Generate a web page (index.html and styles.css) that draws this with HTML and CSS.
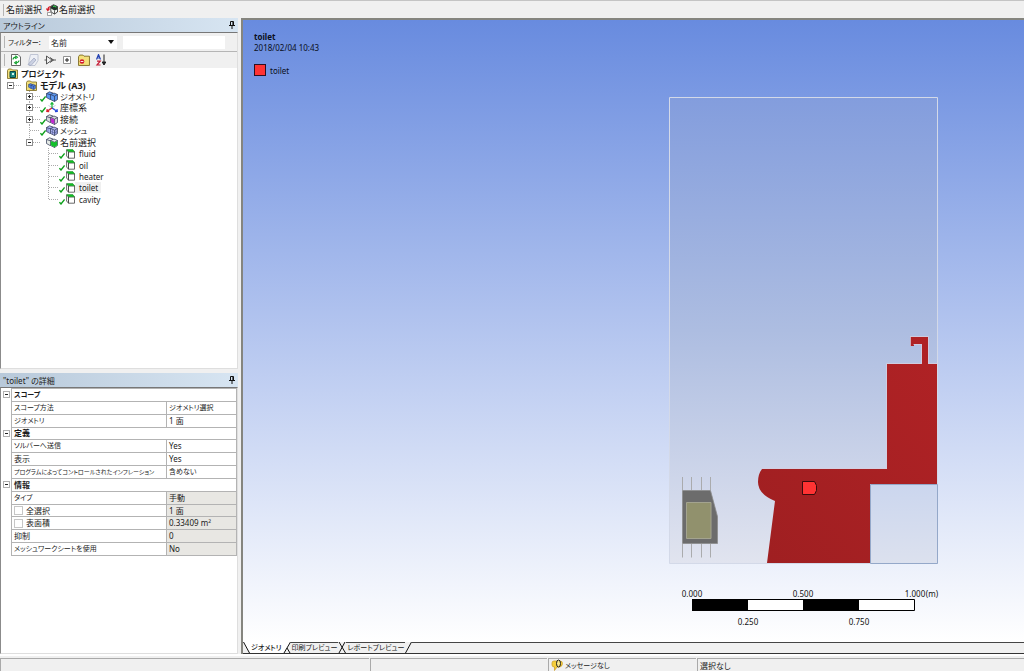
FILE: index.html
```html
<!DOCTYPE html>
<html lang="ja">
<head>
<meta charset="utf-8">
<title>toilet</title>
<link rel="stylesheet" href="styles.css">
</head>
<body>
<svg class="defs" aria-hidden="true">
  <symbol id="pin" viewBox="0 0 6 8"><path d="M1.5 .5h3v4h-3zM0 4.5h6M3 5v3" fill="none" stroke="#111"/><path d="M3.4 1h1.4v3.5H3.4z" fill="#111"/></symbol>
  <symbol id="check" viewBox="0 0 6 8"><path d="M.4 5.200 2 7 5.600 2.400" fill="none" stroke="#0ea01c" stroke-width="1.400"/></symbol>
  <symbol id="cubes" viewBox="0 0 12 11"><g stroke="#2b3450" stroke-width=".7" stroke-linejoin="round"><path d="M.5 2.500 3.500 .8 7 2v5L4 8.500.5 6.500z"/><path d="M4.500 3.500 8 2 11.500 3.500v5L8.500 10.500 4.500 8.500z"/><path d="M4.500 3.500 8.500 5.200 11.500 3.500M8.500 5.200v5.300M.5 2.500l3.800 1.300" fill="none"/></g></symbol>
  <symbol id="sel" viewBox="0 0 9 10"><path d="M2.500 2.900h6v6.300h-6zM.6 1v6l1.900 2.200V2.900z" fill="#fff" stroke="#444" stroke-width=".8"/><path d="M.6.6h6.200l1.900 2.200H2.500z" fill="#0cc822" stroke="#17751f" stroke-width=".5"/></symbol>
  <symbol id="folder" viewBox="0 0 11 11"><path d="M.5 2.500 1.500 1h3l1 1H10.500v8.500H.5z" fill="#f3e07a" stroke="#77651c" stroke-width=".8"/></symbol>
</svg>

<header class="topbar">
  <span class="grip"></span>
  <span>名前選択</span>
  <button class="topbtn"><svg width="12" height="12" viewBox="0 0 12 12"><path d="M4.500 2.500 7.500.7l4 1.800v5.500L8.500 10 5 8z" fill="#f4f6f4" stroke="#222" stroke-width=".8"/><path d="M5 2.500 7.500 1l3.800 1.500v3L8.500 6.500 5 4.500z" fill="#23332a"/><path d="M7 2.500 9 2l1 1.500" stroke="#35dc50" fill="none"/><path d="M8.500 6.500V10" stroke="#222" stroke-width=".7"/><path d="M4.500 2.500Q1.800 3 1.800 6M.3 4.500l1.500 2 1.700-2" fill="none" stroke="#d51c28" stroke-width="1.200"/><path d="M1.500 8.500h4v3h-4z" fill="#fff" stroke="#777" stroke-width=".7"/></svg>名前選択</button>
</header>

<main class="work">
  <aside class="side">
    <section class="pane outline">
      <h2 class="title">アウトライン<button class="pin" aria-label="固定"><svg width="6" height="8"><use href="#pin"/></svg></button></h2>
      <div class="frame">
        <div class="filter">
          <span class="grip"></span>
          <label for="kind">フィルター:</label>
          <span class="drop"><select id="kind"><option>名前</option></select></span>
          <input class="query" type="text" aria-label="フィルター文字列">
        </div>
        <div class="tools">
          <span class="grip"></span>
          <button aria-label="更新"><svg width="12" height="12" viewBox="0 0 12 12"><path d="M1.500.5h6.500L10.500 3v8.500h-9z" fill="#fff" stroke="#444" stroke-width=".8"/><path d="M3 5.500Q3.500 3 6 3.200M5.300 1.800l2 1.500-2 1.400M9 6.500Q8.500 9 6 8.800M6.700 7.300l-2 1.500 2 1.400" fill="none" stroke="#18a332" stroke-width="1.200"/></svg></button>
          <button aria-label="編集"><svg width="12" height="12" viewBox="0 0 12 12"><path d="M3.500.5h7.500v6l-3 5h-6v-5z" fill="#eef0f6" stroke="#b4bacb" stroke-width=".8"/><path d="M1 10.500 7 4l2 2-5 5.500z" fill="#cbd1e3" stroke="#9aa2ba" stroke-width=".7"/></svg></button>
          <button aria-label="フィルター"><svg width="12" height="12" viewBox="0 0 12 12"><path d="M2.500 2v8L8 6zM.5 6h2M8 6h4M6 3.500 9.500 6 6 8.500" fill="none" stroke="#444" stroke-width=".9"/></svg></button>
          <button aria-label="展開"><svg width="12" height="12" viewBox="0 0 12 12"><path d="M2.500 2.500h7v7h-7z" fill="#fff" stroke="#777" stroke-width=".8"/><path d="M4 6h4M6 4v4" stroke="#222"/></svg></button>
          <button aria-label="非表示"><svg width="12" height="12"><use href="#folder" width="12" height="12"/><circle cx="4" cy="7.500" r="2.300" fill="#d3192c"/><path d="M2.600 7.500h2.800" stroke="#fff" stroke-width=".9"/></svg></button>
          <button aria-label="並べ替え"><svg width="12" height="12" viewBox="0 0 12 12"><path d="m1.500 5.500 2-5 2 5M2.300 4h2.500" fill="none" stroke="#2644b4" stroke-width="1.200"/><path d="M2 7.200h3.200L2 11h3.500" fill="none" stroke="#c51c35" stroke-width="1.200"/><path d="M9 .5v9M7.200 8 9 11l1.800-3z" fill="#222" stroke="#222"/></svg></button>
        </div>
        <ul class="tree">
          <li class="row l0"><svg class="ico" width="11" height="11"><use href="#folder"/><path d="M3 3.500h5.500v6H3z" fill="#1c8d83" stroke="#0c4441"/><path d="M5 5h2v2H5z" fill="#d4f2ee"/></svg><b class="kana">プロジェクト</b></li>
          <li class="row l1"><button class="exp minus" aria-label="折りたたむ"></button><i class="dots"></i><svg class="ico" width="11" height="11"><use href="#folder"/><use href="#cubes" x="2" y="3" width="8" height="7" fill="#4f82e6"/></svg><b>モデル (A3)</b></li>
          <li class="row l2"><button class="exp" aria-label="展開"></button><i class="dots"></i><svg class="check"><use href="#check"/></svg><svg class="ico" width="12" height="11"><use href="#cubes" fill="#5b97f0"/></svg><span class="kana">ジオメトリ</span></li>
          <li class="row l2"><button class="exp" aria-label="展開"></button><i class="dots"></i><svg class="check"><use href="#check"/></svg><svg class="ico" width="12" height="11" fill="none" stroke-width="1.200"><path d="m2.500 3.500 7 4M9.500 3.500l-7 4" stroke="#9aa6cc" stroke-width=".6"/><path d="M6 6V1M4.500 2.500 6 .6l1.500 1.900" stroke="#18b536"/><path d="m6 6 4.500 3M11 7l.3 2.400-2.300.3" stroke="#2447dc"/><path d="m6 6-4.500 3M1.200 7l-.4 2.400 2.400.2" stroke="#d8232d"/></svg><span>座標系</span></li>
          <li class="row l2"><button class="exp" aria-label="展開"></button><i class="dots"></i><svg class="check"><use href="#check"/></svg><svg class="ico" width="12" height="11"><use href="#cubes" fill="#d5d7db"/><path d="m4.800 4 3.500 1.500v4.500L4.800 8.200z" fill="#c22bd0"/></svg><span>接続</span></li>
          <li class="row l2"><i class="dots wide"></i><svg class="check"><use href="#check"/></svg><svg class="ico" width="12" height="11"><use href="#cubes" fill="#b0b7f2"/><path d="M2 3v4M6.500 5v4M10 5v4M5 6.500l3.500 1.500L11 6.500" stroke="#454c88" stroke-width=".5" fill="none"/></svg><span class="kana">メッシュ</span></li>
          <li class="row l2 last"><button class="exp minus" aria-label="折りたたむ"></button><i class="dots"></i><i class="check"></i><svg class="ico" width="12" height="11"><use href="#cubes" fill="#e4e9e5"/><path d="m4.800 4 3.700 1.500L11.200 4v4.300L8.500 10.200 4.800 8.200z" fill="#12c02b"/></svg><span>名前選択</span></li>
          <li class="row l3"><i class="dots"></i><svg class="check"><use href="#check"/></svg><svg class="ico" width="9" height="10"><use href="#sel"/></svg><span>fluid</span></li>
          <li class="row l3"><i class="dots"></i><svg class="check"><use href="#check"/></svg><svg class="ico" width="9" height="10"><use href="#sel"/></svg><span>oil</span></li>
          <li class="row l3"><i class="dots"></i><svg class="check"><use href="#check"/></svg><svg class="ico" width="9" height="10"><use href="#sel"/></svg><span>heater</span></li>
          <li class="row l3"><i class="dots"></i><svg class="check"><use href="#check"/></svg><svg class="ico" width="9" height="10"><use href="#sel"/></svg><span class="picked">toilet</span></li>
          <li class="row l3 last"><i class="dots"></i><svg class="check"><use href="#check"/></svg><svg class="ico" width="9" height="10"><use href="#sel"/></svg><span>cavity</span></li>
        </ul>
      </div>
    </section>

    <section class="pane details">
      <h2 class="title">"toilet" の詳細<button class="pin" aria-label="固定"><svg width="6" height="8"><use href="#pin"/></svg></button></h2>
      <div class="frame">
        <table class="props">
          <colgroup><col class="c-exp"><col class="c-name"><col></colgroup>
          <tbody>
            <tr><td class="tog"><button class="exp minus" aria-label="折りたたむ"></button></td><th class="narrow" colspan="2">スコープ</th></tr>
            <tr><td class="tog"></td><td class="narrow">スコープ方法</td><td class="narrow">ジオメトリ選択</td></tr>
            <tr><td class="tog"></td><td class="narrow">ジオメトリ</td><td>1 面</td></tr>
            <tr><td class="tog"><button class="exp minus" aria-label="折りたたむ"></button></td><th colspan="2">定義</th></tr>
            <tr><td class="tog"></td><td class="narrow">ソルバーへ送信</td><td>Yes</td></tr>
            <tr><td class="tog"></td><td>表示</td><td>Yes</td></tr>
            <tr><td class="tog"></td><td class="long">プログラムによってコントロールされたインフレーション</td><td class="narrow">含めない</td></tr>
            <tr><td class="tog"><button class="exp minus" aria-label="折りたたむ"></button></td><th colspan="2">情報</th></tr>
            <tr><td class="tog"></td><td class="narrow">タイプ</td><td class="ro">手動</td></tr>
            <tr><td class="tog"></td><td><label><input type="checkbox">全選択</label></td><td class="ro">1 面</td></tr>
            <tr><td class="tog"></td><td><label><input type="checkbox">表面積</label></td><td class="ro">0.33409 m²</td></tr>
            <tr><td class="tog"></td><td>抑制</td><td class="ro">0</td></tr>
            <tr><td class="tog"></td><td class="narrow">メッシュワークシートを使用</td><td class="ro">No</td></tr>
          </tbody>
        </table>
      </div>
    </section>
  </aside>

  <section class="view">
    <div class="canvas">
      <svg class="scene" viewBox="243 20 781 622" preserveAspectRatio="xMaxYMax meet">
        <defs>
          <linearGradient id="air" x1="0" y1="0" x2="0" y2="1"><stop offset="0" stop-color="#839ddd"/><stop offset=".5" stop-color="#adbde1"/><stop offset="1" stop-color="#e1e4ef"/></linearGradient>
          <linearGradient id="box" x1="0" y1="0" x2="0" y2="1"><stop offset="0" stop-color="#cbd6ee"/><stop offset="1" stop-color="#dce1ee"/></linearGradient>
          <linearGradient id="body" x1="1" y1="0" x2="0" y2="1"><stop offset="0" stop-color="#b02225"/><stop offset="1" stop-color="#9f1f21"/></linearGradient>
        </defs>
        <path d="M669.500 97.500h268v466h-268z" fill="url(#air)" stroke="#d3d9e8"/>
        <path d="M870.500 484.500h67v79h-67z" fill="url(#box)" stroke="#94a8c9"/>
        <path d="M762 469h125V364h35v-20h-8v2h-4v-9h18v27h9v120h-67v79H767l8-62Q758 494 758 482 758 474 762 469z" fill="url(#body)"/>
        <path d="M762 468.500h124.500V363.500H921.500V344.500h-8M910.500 346v-9.500h18v27h9" fill="none" stroke="#d5cede" stroke-width=".8"/>
        <path d="M682.500 477v13m9-13v13m10-13v13m9-13v13M682.500 544v13.500m9-13.500v13.500m10-13.500v13.500m9-13.500v13.500" stroke="#aaabad"/>
        <path d="M682.500 490.500h28l7 26v27h-35z" fill="#6c6c6c" stroke="#8b8b8b" stroke-width=".8"/>
        <path d="M686.500 502.500h24.500v36h-24.500z" fill="#91916d" stroke="#a3a38f"/>
        <path d="M802.500 481.500h12l2 4v5l-2 4h-12z" fill="#ff3333" stroke="#3b0b0c"/>
        <path d="M692.500 599.500h222v11h-222z" fill="#fff" stroke="#000"/>
        <path d="M692 599h56v12h-56zM803 599h56v12h-56z"/>
        <g class="ticks"><text x="692" y="597">0.000</text><text x="803" y="597">0.500</text><text x="915" y="597">1.000</text><text x="932" y="597">(m)</text><text x="748" y="625">0.250</text><text x="859" y="625">0.750</text></g>
      </svg>
      <div class="legend">
        <b>toilet</b>
        <span>2018/02/04 10:43</span>
        <span class="key"><i class="swatch"></i>toilet</span>
      </div>
    </div>
    <nav class="tabs">
      <svg width="7" height="11"><path d="M0 0h7v11z" fill="#fff"/><path d="M.5 0 6.500 11" stroke="#111"/></svg>
      <button class="tab on">ジオメトリ</button>
      <svg width="8" height="11"><path d="M0 0h7L1 11H0z" fill="#fff"/><path d="M7.500 0 1 11M4 6l3 5" fill="none" stroke="#111"/></svg>
      <button class="tab">印刷プレビュー</button>
      <svg width="8" height="11"><path d="M1 0l6.500 11M7 0 1 11" fill="none" stroke="#111"/></svg>
      <button class="tab">レポートプレビュー</button>
      <svg width="7" height="11"><path d="M6.500 0 .5 11" fill="none" stroke="#111"/></svg>
      <span class="rest"></span>
    </nav>
  </section>
</main>

<footer class="status">
  <span></span>
  <span></span>
  <span class="narrow"><svg width="12" height="12" viewBox="0 0 12 12"><path d="M1 4q0-2 2-2h6q2.500 0 2.500 2.500T9 8H6l-2.500 3.500V8Q1 8 1 6z" fill="#f5cf3c" stroke="#c99a1d" stroke-width=".7"/><ellipse cx="7.500" cy="4.500" rx="2" ry="3.500" fill="#fbe98a" stroke="#222"/></svg>メッセージなし</span>
  <span>選択なし</span>
</footer>
</body>
</html>
```
FILE: styles.css
```css
* { box-sizing: border-box; }
body {
  margin: 0;
  height: 100vh;
  display: flex;
  flex-direction: column;
  background: #f0f0f0;
  color: #1b1b1b;
  font: 8px/11px "Noto Sans", "Noto Sans CJK JP", sans-serif;
  font-feature-settings: "palt";
  white-space: nowrap;
  overflow: hidden;
}
button, input, select {
  margin: 0;
  padding: 0;
  border: 0;
  background: none;
  color: inherit;
  font: inherit;
  font-feature-settings: inherit;
}
svg { flex: none; display: block; }
.defs { position: absolute; width: 0; height: 0; }
.grip { width: 1px; height: 12px; background: #b4b4b4; flex: none; }
.narrow { font-size: 7px; }

.topbar {
  display: flex;
  align-items: center;
  height: 18px;
  padding-left: 3px;
  gap: 2px;
  border-top: 1px solid #c4c4c4;
  font-size: 9px;
}
.topbtn { display: flex; align-items: center; gap: 1px; margin-left: 2px; }

.work { flex: 1; display: flex; min-height: 0; gap: 3px; }
.side { width: 238px; flex: none; display: flex; flex-direction: column; gap: 4px; }
.pane { display: flex; flex-direction: column; min-height: 0; }
.outline { flex: 351 1 0; }
.details { flex: 281 1 0; }
.title {
  display: flex;
  align-items: center;
  justify-content: space-between;
  flex: none;
  height: 14px;
  margin: 0;
  padding: 0 3px;
  background: linear-gradient(90deg, #b8c9da, #d7e5f2);
  font-size: 8px;
  font-weight: 400;
}
.frame {
  flex: 1;
  min-height: 0;
  background: #fff;
  border: 1px solid #dedede;
  border-top-color: #777;
  border-left-color: #8b8b8b;
}
.filter {
  display: flex;
  align-items: center;
  height: 19px;
  padding-left: 3px;
  background: #f0f0f0;
  border-bottom: 1px solid #b5b5b5;
}
.filter label { width: 44px; padding-left: 3px; font-size: 7px; }
.drop {
  display: flex;
  align-items: center;
  width: 68px;
  height: 13px;
  padding-right: 3px;
  background: #fff;
  margin-right: 6px;
}
.drop select { flex: 1; appearance: none; padding-left: 2px; outline: 0; }
.drop::after {
  content: "";
  border: 3px solid transparent;
  border-top: 4px solid #111;
  border-bottom: 0;
}
.query { width: 102px; height: 13px; background: #fff; }
.tools {
  display: flex;
  align-items: center;
  height: 16px;
  gap: 5px;
  padding-left: 3px;
  background: #f0f0f0;
}

.tree {
  display: grid;
  grid-auto-rows: 1fr;
  height: 137px;
  margin: 0;
  padding: 0;
  list-style: none;
}
.row { display: flex; align-items: center; background-repeat: no-repeat; }
.row b { font-weight: 700; }
.l0, .l1, .l2 { font-size: 9px; }
.row .kana { font-size: 8px; }
.l0 { padding-left: 6px; }
.l1 { padding-left: 6px; }
.l2 {
  padding-left: 25px;
  background-image: repeating-linear-gradient(#aaa 0 1px, #fff 1px 2px);
  background-size: 1px 100%;
  background-position: 28px 0;
}
.l3 {
  padding-left: 48px;
  background-image: repeating-linear-gradient(#aaa 0 1px, #fff 1px 2px);
  background-size: 1px 100%;
  background-position: 47px 0;
}
.row.last { background-size: 1px 50%; }
.exp {
  position: relative;
  width: 7px;
  height: 7px;
  flex: none;
  border: 1px solid #8f8f8f;
  background:
    linear-gradient(#222, #222) center / 3px 1px no-repeat,
    linear-gradient(#222, #222) center / 1px 3px no-repeat,
    #fff;
}
.exp.minus { background: linear-gradient(#222, #222) center / 3px 1px no-repeat, #fff; }
.dots {
  width: 7px;
  height: 1px;
  flex: none;
  background: repeating-linear-gradient(90deg, #aaa 0 1px, #fff 1px 2px);
}
.dots.wide { width: 10px; margin-left: 4px; }
.l3 .dots { width: 10px; }
.check { width: 6px; height: 8px; flex: none; margin-top: 3px; }
.l1 .ico { margin-left: 5px; }
.l3 .ico { margin-left: 1px; }
.row b, .row span { padding: 0 3px; }
.l2 span { padding-left: 2px; }
.l3 span { padding-left: 4px; }
.picked { background: #f0f0f0; }

.props {
  width: 100%;
  height: 168px;
  table-layout: fixed;
  border-collapse: collapse;
}
.c-exp { width: 10px; }
.c-name { width: 155px; }
.props td, .props th {
  height: 12px;
  padding: 0 0 0 2px;
  border: 1px solid #b3b3b3;
  line-height: 10px;
  font-weight: 400;
  text-align: left;
}
.props th { font-weight: 700; }
.props .long { font-size: 6px; }
.props td.tog { padding: 0 0 0 1px; border-color: transparent #b3b3b3 transparent transparent; }
.props td.ro { background: #e8e7e3; }
.props .exp { display: block; border-color: #b0b0b0; }
.props label { display: flex; align-items: center; gap: 3px; }
.props input {
  appearance: none;
  width: 9px;
  height: 9px;
  border: 1px solid #c6c6c6;
  background: #fff;
}

.view {
  flex: 1;
  min-width: 0;
  display: flex;
  flex-direction: column;
  border: 2px solid #85857f;
  border-right: 0;
  border-bottom: 0;
}
.canvas {
  position: relative;
  flex: 1;
  min-height: 0;
  background: linear-gradient(#688bdf, #fff);
}
.scene { position: absolute; inset: 0; width: 100%; height: 100%; }
.ticks text { font-size: 8px; text-anchor: middle; fill: #111; }
.legend {
  position: relative;
  display: flex;
  flex-direction: column;
  padding: 11px;
  color: #0a0f20;
}
.key { display: flex; align-items: center; gap: 4px; margin-top: 11px; }
.swatch { width: 12px; height: 12px; background: #f33; border: 1px solid #301020; }
.tabs {
  display: flex;
  height: 12px;
  flex: none;
  border-bottom: 1px solid #333;
  font-size: 7px;
}
.tab { border-top: 1px solid #444; padding: 0 1px; line-height: 10px; }
.tab.on { background: #fff; border-top-color: #fff; font-weight: 500; }
.rest { flex: 1; border-top: 1px solid #444; }

.status {
  display: grid;
  grid-template-columns: 369px 177px 148px 1fr;
  gap: 1px;
  flex: none;
  height: 17px;
  padding-top: 2px;
  border-top: 2px solid #fff;
}
.status span {
  display: flex;
  align-items: center;
  gap: 2px;
  padding-left: 2px;
  border-top: 1px solid #aaa;
  border-left: 1px solid #aaa;
}
```
